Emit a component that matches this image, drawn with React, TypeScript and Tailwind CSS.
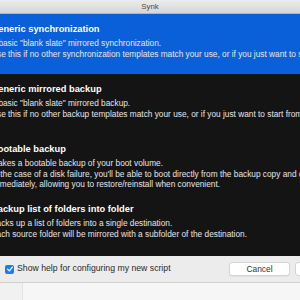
const items = [
  {
    title: "Generic synchronization",
    lines: [
      'A basic "blank slate" mirrored synchronization.',
      "Use this if no other synchronization templates match your use, or if you just want to start from scratch.",
    ],
  },
  {
    title: "Generic mirrored backup",
    lines: [
      'A basic "blank slate" mirrored backup.',
      "Use this if no other backup templates match your use, or if you just want to start from scratch.",
    ],
  },
  {
    title: "Bootable backup",
    lines: [
      "Makes a bootable backup of your boot volume.",
      "In the case of a disk failure, you'll be able to boot directly from the backup copy and continue working",
      "immediately, allowing you to restore/reinstall when convenient.",
    ],
  },
  {
    title: "Backup list of folders into folder",
    lines: [
      "Backs up a list of folders into a single destination.",
      "Each source folder will be mirrored with a subfolder of the destination.",
    ],
  },
];

const App = () => {
  return (
    <div
      className="w-[300px] h-[300px] overflow-hidden bg-[#f3f3f3] flex flex-col"
      style={{ fontFamily: '"Liberation Sans", Arial, sans-serif' }}
    >
      {/* title bar */}
      <div className="h-[14px] shrink-0 bg-gradient-to-b from-[#ececec] to-[#d6d6d6] border-b border-[#b5b5b5] flex items-center justify-center text-[7.8px] text-[#4a4a4a]">
        Synk
      </div>

      {/* template list */}
      <div className="bg-[#141414] flex flex-col h-[242px] shrink-0 overflow-hidden">
        {items.map((item, i) => (
          <div
            key={item.title}
            className={`h-[60px] shrink-0 pt-[9px] whitespace-nowrap ${
              i === 0 ? "bg-[#0a60d9]" : ""
            }`}
          >
            <div className="-ml-[9px]">
              <div className="text-[9.3px] font-bold text-white leading-[12px]">
                {item.title}
              </div>
              <div className="mt-[3px] text-[8.3px] leading-[10.7px] text-[#e6e6e6]">
                {item.lines.map((l) => (
                  <div key={l}>{l}</div>
                ))}
              </div>
            </div>
          </div>
        ))}
      </div>

      {/* bottom bar */}
      <div className="h-[27px] shrink-0 bg-[#ececec] border-b border-[#d0d0d0] flex items-center pl-[5px] overflow-hidden">
        <div className="w-[9px] h-[9px] shrink-0 rounded-[2px] bg-[#1d7cf2] flex items-center justify-center">
          <svg viewBox="0 0 10 10" className="w-[8px] h-[8px]">
            <path d="M2 5.2 L4.2 7.4 L8 2.6" stroke="white" strokeWidth="1.6" fill="none" strokeLinecap="round" strokeLinejoin="round" />
          </svg>
        </div>
        <span className="ml-[3px] text-[8.7px] text-[#2a2a2a] whitespace-nowrap">
          Show help for configuring my new script
        </span>
        <div className="ml-auto -mr-[56px] flex gap-[5px] items-center shrink-0">
          <button className="w-[61px] h-[14px] rounded-[3px] bg-white border border-[#d4d4d4] shadow-[0_0.5px_0.5px_rgba(0,0,0,0.08)] text-[8.4px] text-[#333] flex items-center justify-center">
            Cancel
          </button>
          <button className="w-[61px] h-[14px] rounded-[3px] bg-white border border-[#d4d4d4]" />
        </div>
      </div>

      {/* area beneath the sheet */}
      <div className="flex-1 flex">
        <div className="w-[23px] border-r border-[#e2e2e2] bg-[#f1f1f1]" />
        <div className="flex-1 bg-[#f6f6f6]" />
      </div>
    </div>
  );
};

export default App;
